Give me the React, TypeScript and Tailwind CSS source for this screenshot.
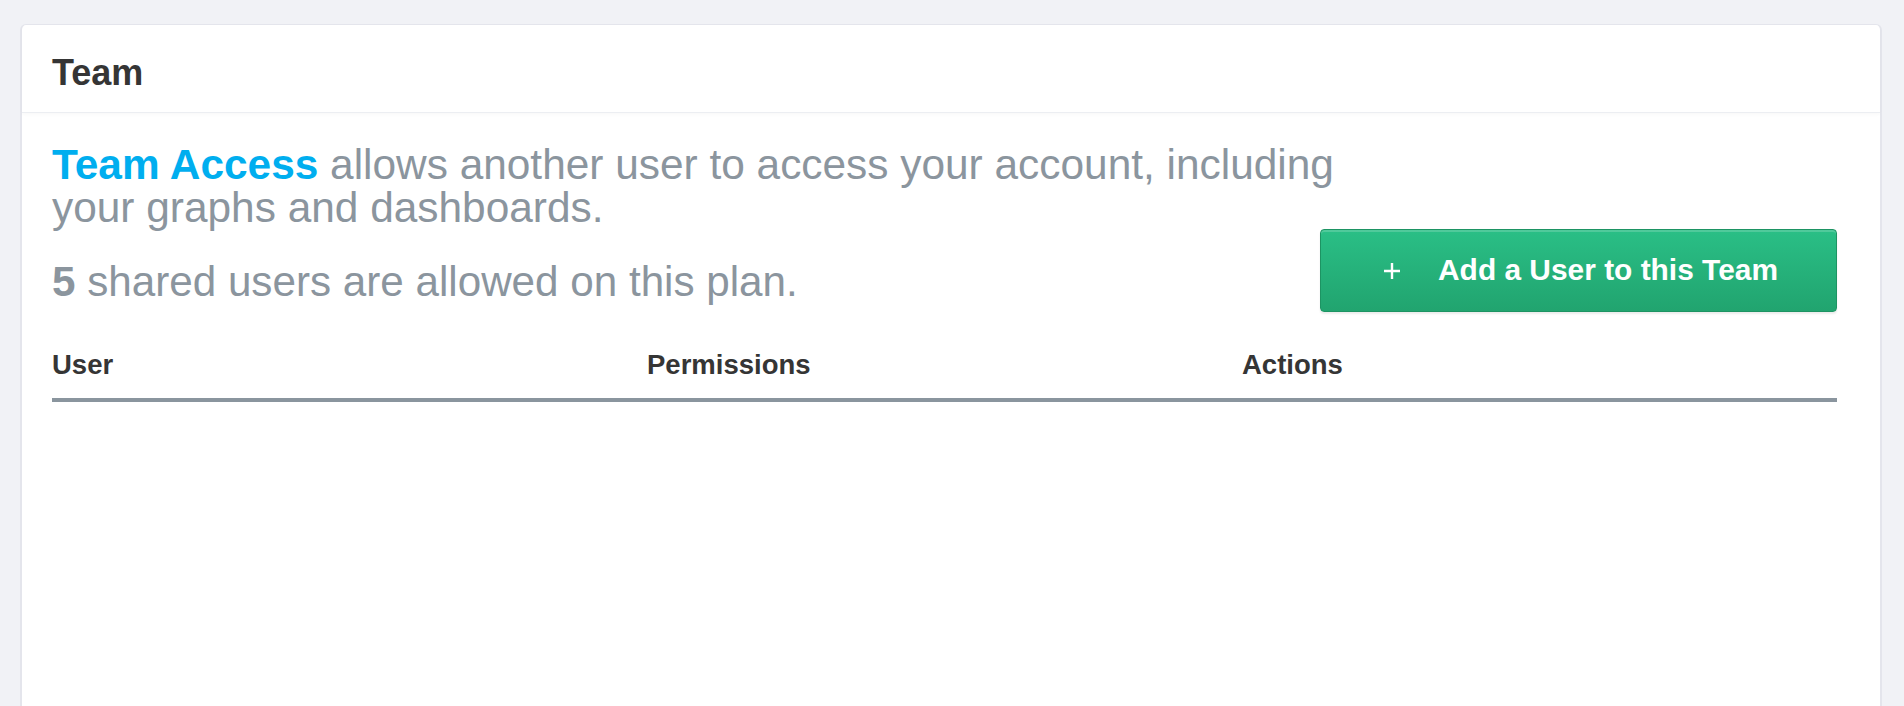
import React from 'react'

const columns = [
  { id: 'user', label: 'User' },
  { id: 'permissions', label: 'Permissions' },
  { id: 'actions', label: 'Actions' },
]

const PlusIcon = () => (
  <svg width="18" height="18" viewBox="0 0 18 18" className="shrink-0">
    <path d="M9 1v16M1 9h16" stroke="#ffffff" strokeWidth="2.4" fill="none" />
  </svg>
)

const App = () => {
  return (
    <div
      className="h-[706px] overflow-hidden bg-[#f1f2f6] pt-[24px]"
      style={{ fontFamily: '"Liberation Sans", Arial, sans-serif' }}
    >
      <section className="ml-[20px] h-[720px] w-[1862px] rounded-t-[6px] border-x-2 border-t border-[#e4e5ec] bg-white">
        {/* Card header */}
        <header className="border-b border-[#eceef2] px-[30px] pt-[31px] pb-[22px] shadow-[0_2px_3px_rgba(0,0,0,0.025)]">
          <h1 className="text-[36px] leading-[34px] font-bold text-[#353535]">Team</h1>
        </header>

        {/* Card body */}
        <div className="pl-[30px] pr-[43px] pt-[30px]">
          <p className="w-[1340px] text-[42.4px] leading-[43px] text-[#8b959e]">
            <span className="font-bold text-[#00aeef]">Team Access</span> allows another user
            to access your account, including your graphs and dashboards.
          </p>

          <div className="flex items-start justify-between">
            <p className="mt-[31px] text-[42.2px] leading-[43px] text-[#8b959e]">
              <span className="font-bold">5</span> shared users are allowed on this plan.
            </p>
            <button className="flex h-[83px] w-[517px] items-center justify-center gap-[37px] rounded-[4px] border border-[#1d9463] bg-gradient-to-b from-[#2abf86] to-[#21a46f] pl-[4px] text-[29.9px] font-bold text-white shadow-[inset_0_2px_0_rgba(255,255,255,0.18),0_2px_2px_rgba(0,0,0,0.08)]">
              <PlusIcon />
              <span>Add a User to this Team</span>
            </button>
          </div>

          {/* Team table */}
          <table className="mt-[37px] w-full table-fixed border-collapse">
            <thead>
              <tr className="border-b-4 border-[#8a959e]">
                {columns.map(({ id, label }) => (
                  <th
                    key={id}
                    className="pb-[16.5px] text-left text-[27.5px] leading-[32px] font-bold text-[#353535]"
                  >
                    {label}
                  </th>
                ))}
              </tr>
            </thead>
            <tbody />
          </table>
        </div>
      </section>
    </div>
  )
}

export default App
